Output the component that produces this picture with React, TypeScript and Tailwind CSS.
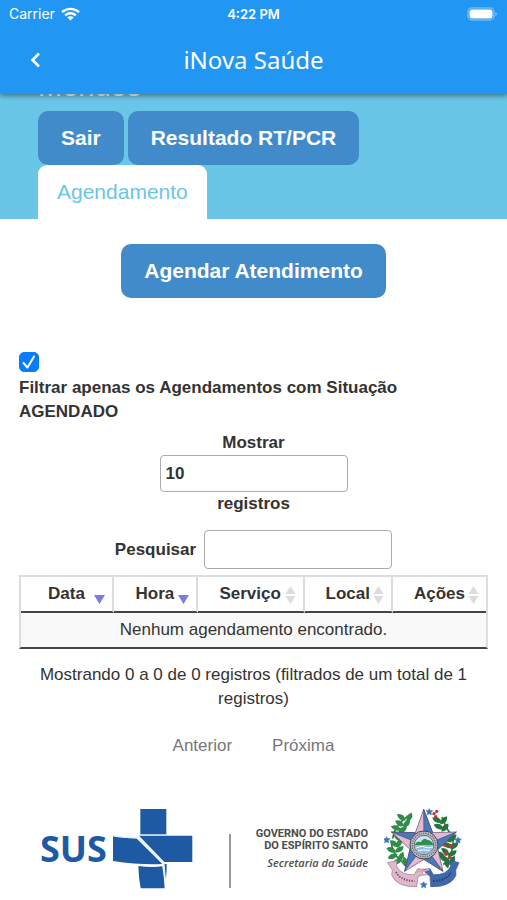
import type { ReactNode } from "react";

const BODY_FONT = "font-['Liberation_Sans',Arial,sans-serif]";

function StatusBar() {
  return (
    <div className="grid h-7 grid-cols-3 items-center px-[9px] font-[Inter,sans-serif] text-[13px] leading-4">
      <div className="flex items-center gap-1.5">
        <span className="text-sm leading-4">Carrier</span>
        <svg className="h-[14px] w-[19px]" viewBox="0 0 19 14" fill="none" stroke="currentColor" strokeWidth="2.4" aria-hidden="true">
          <path d="M1 5.2C5.8.7 13.200.7 18 5.200" />
          <path d="M4.200 8.400c3-2.800 7.600-2.800 10.600 0" />
          <path d="M6.300 10.300 9.500 13.600l3.200-3.300c-1.800-1.500-4.600-1.500-6.400 0Z" fill="currentColor" stroke="none" />
        </svg>
      </div>
      <span className="text-center font-semibold">4:22 PM</span>
      <svg className="h-[14px] w-[31px] justify-self-end" viewBox="0 0 31 14" aria-hidden="true">
        <rect x="1" y="1" width="26" height="12" rx="4" fill="none" stroke="#6fbaf9" strokeWidth="1.500" />
        <rect x="2.500" y="2.500" width="23" height="9" rx="2.500" fill="#fff" />
        <path d="M28.500 5c1.600.4 1.600 3.600 0 4Z" fill="#8fc9fa" />
      </svg>
    </div>
  );
}

function AppHeader() {
  return (
    <header className="sticky top-0 z-10 bg-[#2196f3] text-white shadow-[0_2px_5px_rgba(0,0,0,0.4)]">
      <StatusBar />
      <div className="grid h-[66px] grid-cols-[70px_1fr_70px] items-center pb-0.5">
        <button type="button" aria-label="Voltar" className="flex h-11 items-center justify-center">
          <svg className="h-4 w-3" viewBox="0 0 12 16" fill="none" stroke="currentColor" strokeWidth="2.600" aria-hidden="true">
            <path d="M10 1.500 3.500 8l6.500 6.500" />
          </svg>
        </button>
        <h1 className="text-center font-['Noto_Sans',sans-serif] text-2xl leading-8">iNova Saúde</h1>
      </div>
    </header>
  );
}

function PrimaryButton({ children }: { children: ReactNode }) {
  return (
    <button type="button" className="h-[54px] rounded-[10px] bg-[#428bca] px-[23px] text-[21px] font-bold text-white">
      {children}
    </button>
  );
}

function SortIcon({ active }: { active: boolean }) {
  return (
    <svg className="absolute right-[7px] top-[9px] h-[18px] w-[11px]" viewBox="0 0 11 18" aria-hidden="true">
      {active ? (
        <path d="M0 9h11L5.500 18Z" fill="#7d7be0" />
      ) : (
        <path d="M.5 8 5.500 0l5 8ZM.5 10h10l-5 8Z" fill="#dcdcdc" />
      )}
    </svg>
  );
}

const columns = [
  { name: "Data", active: true, width: "w-[20%]" },
  { name: "Hora", active: true, width: "w-[18%]" },
  { name: "Serviço", active: false, width: "w-[23%]" },
  { name: "Local", active: false, width: "w-[19%]" },
  { name: "Ações", active: false, width: "w-[20%]" },
];

function AppointmentsTable() {
  return (
    <table className="w-full table-fixed border-separate border-spacing-0 border-x-2 border-t-2 border-b-2 border-x-[#ddd] border-t-[#ddd] border-b-[#444]">
      <thead>
        <tr>
          {columns.map((column) => (
            <th
              key={column.name}
              scope="col"
              className={`relative h-9 border-r-2 border-b-2 border-r-[#ddd] border-b-[#444] p-0 text-center font-bold last:border-r-0 ${column.width}`}
            >
              {column.name}
              <SortIcon active={column.active} />
            </th>
          ))}
        </tr>
      </thead>
      <tbody>
        <tr>
          <td colSpan={5} className="h-[34px] bg-[#f9f9f9] p-0 text-center">
            Nenhum agendamento encontrado.
          </td>
        </tr>
      </tbody>
    </table>
  );
}

function SusLogo() {
  return (
    <div className="flex items-center gap-1.5 text-[#1d5aa3]">
      <span className="font-['Open_Sans',sans-serif] text-[36px] leading-10 font-bold">SUS</span>
      <svg className="h-20 w-20" viewBox="0 0 240 240" aria-hidden="true">
        <g fill="currentColor">
          <path d="M82 0h78v76H82Z" />
          <path d="M78 80h160v79h-84Z" />
          <path d="M0 82q30 6 70 6l78 77Q80 168 0 156Z" />
          <path d="M76 171q40 5 72 1 5 30 7 66H83q-6-30-7-67Z" />
          <path d="M154 165h7q0 35-4 55-1-30-3-55Z" />
        </g>
        <path d="M2 80q40 7 74 6l76 78 6 56" fill="none" stroke="#e3f2ff" strokeWidth="4" />
      </svg>
    </div>
  );
}

const leftLeaves = [
  [78, 66, 35], [102, 66, 115], [73, 84, 30], [94, 84, 125], [62, 98, 15], [82, 103, 145],
  [56, 145, 35], [72, 142, 110], [48, 164, 20], [72, 162, 145], [52, 183, 155], [77, 184, 115],
  [66, 198, 145], [88, 199, 80], [65, 124, 55],
];

const rightLeaves = [
  [185, 74, 25], [205, 75, 130], [190, 94, 20], [209, 97, 130], [217, 130, 45], [232, 128, 135],
  [216, 150, 25], [237, 151, 140], [210, 169, 40], [231, 174, 145], [208, 191, 20], [230, 195, 120],
  [215, 204, 80], [198, 180, 45],
];

function Leaf({ x, y, angle, fill }: { x: number; y: number; angle: number; fill: string }) {
  return <path d="M-16 0Q-2-16 16 0 2 15-16 0Z" fill={fill} transform={`translate(${x} ${y}) rotate(${angle})`} />;
}

function CoatOfArms() {
  return (
    <svg className="h-[82px] w-[78px]" viewBox="26 38 234 246" role="img" aria-label="Brasão do Espírito Santo">
      <path d="M100 60Q55 92 52 130M48 140Q52 185 95 210M200 65Q216 110 232 120 240 170 204 208" fill="none" stroke="#2c7a3f" strokeWidth="5" />
      {leftLeaves.map(([x, y, angle]) => (
        <Leaf key={`${x}-${y}`} x={x} y={y} angle={angle} fill="#2f8d48" />
      ))}
      {rightLeaves.map(([x, y, angle]) => (
        <Leaf key={`${x}-${y}`} x={x} y={y} angle={angle} fill="#26743c" />
      ))}
      <g fill="#c8323c">
        <circle cx="176" cy="55" r="5" />
        <circle cx="184" cy="48" r="5" />
        <circle cx="181" cy="64" r="5" />
        <circle cx="207" cy="148" r="6" />
        <circle cx="226" cy="151" r="6" />
        <circle cx="212" cy="176" r="6" />
        <circle cx="225" cy="187" r="5" />
      </g>
      <g stroke="#47476d" strokeWidth="2" strokeLinejoin="round">
        <path d="M145 42 172 112 243 110 188 162 203 228 146 192 88 228 104 162 48 110 120 112Z" fill="#e6b8d0" />
        <path d="M145 42 172 112 146 150ZM243 110 188 162 146 150ZM203 228 146 192 146 150ZM88 228 104 162 146 150ZM48 110 120 112 146 150Z" fill="#4779bb" />
      </g>
      <circle cx="146" cy="149" r="42" fill="#c4c3cc" stroke="#3d4250" strokeWidth="3" />
      <circle cx="146" cy="149" r="35" fill="none" stroke="#6a6e7a" strokeWidth="5" strokeDasharray="4 3" />
      <circle cx="146" cy="149" r="29" fill="#cfe5f4" stroke="#333" strokeWidth="2" />
      <path d="M118 149q9-15 18-8 9-17 20-7 13 0 18 15Z" fill="#2e914c" />
      <path d="M118 149h56q-2 26-28 28-25-2-28-28Z" fill="#8fbce6" />
      <path d="m121 158 18-5 22 5 12-4M128 167l16-4 19 3" fill="none" stroke="#fff" strokeWidth="3" />
      <g strokeWidth="2" strokeLinejoin="round">
        <path d="M37 202 65 196 64 213Q76 240 117 238L127 220 146 222 138 240 128 244 124 274Q63 276 49 238L51 224Z" fill="#dfb9ca" stroke="#957387" />
        <path d="M251 202 225 195 226 213Q214 240 174 238L164 220 146 222 150 232 164 243 166 274Q226 276 242 240L241 225Z" fill="#3e69aa" stroke="#35568e" />
      </g>
      <path d="M62 230q15 27 56 27" fill="none" stroke="#765368" strokeWidth="6" strokeDasharray="4 4" />
      <path d="M174 257q38-1 54-26" fill="none" stroke="#203e75" strokeWidth="6" strokeDasharray="4 4" />
      <path d="M122 232q8-10 24-5l16-5M132 240l24-3" fill="none" stroke="#d3a6bd" strokeWidth="6" />
      <path
        d="m145 259 3 6 7 0-5 5 1 7-6-3-6 3 1-7-5-5 7 0ZM162 40l3 6 7 0-5 5 1 7-6-3-6 3 1-7-5-5 7 0ZM34 124l3 6 7 0-5 5 1 7-6-3-6 3 1-7-5-5 7 0ZM248 125l3 6 7 0-5 5 1 7-6-3-6 3 1-7-5-5 7 0Z"
        fill="#3974b9"
        stroke="#3974b9"
        strokeWidth="2"
      />
    </svg>
  );
}

function GovernmentLogo() {
  return (
    <div className="flex items-center gap-4">
      <div className="text-right text-[#4c4c4c]">
        <p className="font-[Roboto,sans-serif] text-[11px] leading-3 font-bold">
          GOVERNO DO ESTADO
          <br />
          DO ESPÍRITO SANTO
        </p>
        <p className="mt-1 font-['Open_Sans',sans-serif] text-[11px] leading-[14px] font-semibold italic">
          Secretaria da Saúde
        </p>
      </div>
      <CoatOfArms />
    </div>
  );
}

export default function App() {
  return (
    <div className={`min-h-screen bg-white text-[17px] leading-6 text-[#333] ${BODY_FONT}`}>
      <AppHeader />
      <section className="bg-[#6ac6e6] px-[38px]">
        <h2 className="-mt-7 text-[29px] leading-10 text-white">Mendes</h2>
        <div className="mt-[5px] flex flex-wrap gap-1">
          <PrimaryButton>Sair</PrimaryButton>
          <PrimaryButton>Resultado RT/PCR</PrimaryButton>
        </div>
        <nav className="flex">
          <a href="#agendamento" className="rounded-t-[9px] bg-white px-[19px] text-[21px] leading-[54px] text-[#6ac6e6]">
            Agendamento
          </a>
        </nav>
      </section>

      <main id="agendamento" className="px-[19px] pt-[25px]">
        <div className="flex justify-center">
          <PrimaryButton>Agendar Atendimento</PrimaryButton>
        </div>

        <div className="mt-[54px] flex flex-col items-start gap-1 font-bold">
          <div className="grid">
            <input
              id="somente-agendados"
              type="checkbox"
              defaultChecked
              className="peer col-start-1 row-start-1 h-5 w-5 appearance-none rounded-[5px] border border-[#bbb] bg-white checked:border-[#087cff] checked:bg-[#087cff]"
            />
            <svg
              className="pointer-events-none invisible col-start-1 row-start-1 h-5 w-5 peer-checked:visible"
              viewBox="0 0 20 20"
              fill="none"
              stroke="#fff"
              strokeWidth="2"
              strokeLinecap="round"
              strokeLinejoin="round"
              aria-hidden="true"
            >
              <path d="m4.500 11 4 4.500L15 4.500" />
            </svg>
          </div>
          <label htmlFor="somente-agendados">Filtrar apenas os Agendamentos com Situação AGENDADO</label>
        </div>

        <label className="mt-[7px] flex flex-col items-center font-bold">
          Mostrar
          <select defaultValue="10" className="h-[37px] w-[188px] appearance-none rounded-[4px] border border-[#aaa] bg-white px-[5px] font-bold">
            <option>10</option>
            <option>25</option>
            <option>50</option>
            <option>100</option>
          </select>
          registros
        </label>

        <div className="mt-[14px] flex items-center justify-center gap-2 font-bold">
          <label htmlFor="pesquisar">Pesquisar</label>
          <input id="pesquisar" type="search" className="h-[39px] w-[188px] rounded-[4px] border border-[#aaa] bg-white px-[5px]" />
        </div>

        <div className="mt-1.5">
          <AppointmentsTable />
        </div>

        <p className="mt-[14px] px-4 text-center">Mostrando 0 a 0 de 0 registros (filtrados de um total de 1 registros)</p>

        <div className="mt-[23px] flex justify-center gap-10 text-[#777]">
          <button type="button">Anterior</button>
          <button type="button">Próxima</button>
        </div>
      </main>

      <footer className="mt-[50px] flex items-center justify-between pr-[45px] pl-10">
        <SusLogo />
        <div className="mt-6 ml-3 h-[54px] w-0.5 bg-[#999]" />
        <GovernmentLogo />
      </footer>
    </div>
  );
}
